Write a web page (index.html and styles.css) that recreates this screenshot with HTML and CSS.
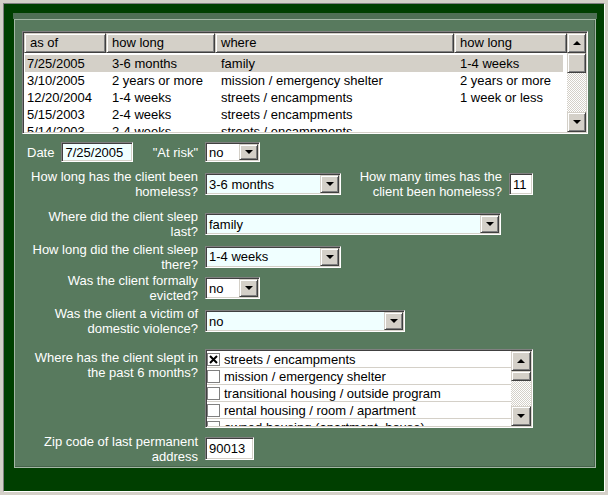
FILE: index.html
```html
<!DOCTYPE html>
<html lang="en">
<head>
    <meta charset="UTF-8">
    <title>Homeless history</title>
    <link rel="stylesheet" href="styles.css">
</head>
<body>
    <div class="frame">
        <div class="tab-strip"></div>
        <div class="panel">

            <!-- previous entries -->
            <div class="history">
                <div class="history-main">
                    <div class="history-head">
                        <div class="head-cell">as of</div>
                        <div class="head-cell">how long</div>
                        <div class="head-cell">where</div>
                        <div class="head-cell">how long</div>
                    </div>
                    <div class="history-rows">
                        <div class="history-row selected"><span>7/25/2005</span><span>3-6 months</span><span>family</span><span>1-4 weeks</span></div>
                        <div class="history-row"><span>3/10/2005</span><span>2 years or more</span><span>mission / emergency shelter</span><span>2 years or more</span></div>
                        <div class="history-row"><span>12/20/2004</span><span>1-4 weeks</span><span>streets / encampments</span><span>1 week or less</span></div>
                        <div class="history-row"><span>5/15/2003</span><span>2-4 weeks</span><span>streets / encampments</span><span></span></div>
                        <div class="history-row"><span>5/14/2003</span><span>2-4 weeks</span><span>streets / encampments</span><span></span></div>
                    </div>
                </div>
                <div class="scrollbar">
                    <div class="sb-btn"><span class="arrow-up"></span></div>
                    <div class="sb-thumb"></div>
                    <div class="sb-track"></div>
                    <div class="sb-btn"><span class="arrow-down"></span></div>
                </div>
            </div>

            <!-- current entry -->
            <div class="intake">
                <div class="date-group">
                    <span class="date-wrap">
                        <span class="q">Date</span>
                        <span class="field tinted date-field">7/25/2005</span>
                    </span>
                    <span class="q">"At risk"</span>
                </div>
                <div class="field dropdown short small">
                    <span class="value">no</span><span class="drop-btn"><span class="arrow-down"></span></span>
                </div>

                <div class="q">How long has the client been<br>homeless?</div>
                <div class="pair">
                    <div class="field tinted dropdown medium">
                        <span class="value">3-6 months</span><span class="drop-btn"><span class="arrow-down"></span></span>
                    </div>
                    <div class="q count-label">How many times has the<br>client been homeless?</div>
                    <div class="field count-field">11</div>
                </div>

                <div class="q">Where did the client sleep<br>last?</div>
                <div class="field tinted dropdown wide">
                    <span class="value">family</span><span class="drop-btn"><span class="arrow-down"></span></span>
                </div>

                <div class="q">How long did the client sleep<br>there?</div>
                <div class="field tinted dropdown medium">
                    <span class="value">1-4 weeks</span><span class="drop-btn"><span class="arrow-down"></span></span>
                </div>

                <div class="q">Was the client formally<br>evicted?</div>
                <div class="field dropdown short">
                    <span class="value">no</span><span class="drop-btn"><span class="arrow-down"></span></span>
                </div>

                <div class="q">Was the client a victim of<br>domestic violence?</div>
                <div class="field tinted dropdown half">
                    <span class="value">no</span><span class="drop-btn"><span class="arrow-down"></span></span>
                </div>

                <div class="q top">Where has the client slept in<br>the past 6 months?</div>
                <div class="checklist">
                    <div class="check-items">
                        <div class="check-item"><span class="box"><svg width="11" height="11" viewBox="0 0 11 11"><path d="M2 2l7 7M9 2l-7 7" stroke="#000" stroke-width="2"/></svg></span>streets / encampments</div>
                        <div class="check-item"><span class="box"></span>mission / emergency shelter</div>
                        <div class="check-item"><span class="box"></span>transitional housing / outside program</div>
                        <div class="check-item"><span class="box"></span>rental housing / room / apartment</div>
                        <div class="check-item"><span class="box"></span>owned housing (apartment, house)</div>
                    </div>
                    <div class="scrollbar list-bar">
                        <div class="sb-btn"><span class="arrow-up"></span></div>
                        <div class="sb-thumb"></div>
                        <div class="sb-track"></div>
                        <div class="sb-btn"><span class="arrow-down"></span></div>
                    </div>
                </div>

                <div class="q">Zip code of last permanent<br>address</div>
                <div class="field zip-field">90013</div>
            </div>
        </div>
    </div>
</body>
</html>
```

FILE: styles.css
```css
/* Form window */
body {
    margin: 0;
    background: #d4d0c8;
    font: 13px "Liberation Sans", Arial, sans-serif;
    color: #000;
}

.frame {
    margin: 3px;
    height: 489px;
    box-sizing: border-box;
    border: 1px solid;
    border-color: #808080 #fff #fff #808080;
    background: #003f00;
    padding: 9px 8px 0 10px;
}

.tab-strip {
    height: 6px;
    margin: 0 -1px;
    background: #4f6f55;
}

.panel {
    height: 449px;
    box-sizing: border-box;
    border: 1px solid #a3b7a5;
    box-shadow: inset -1px -1px #46644b;
    background: #587a5e;
    padding: 11px 7px 0;
}

/* sunken / raised borders, windows classic */
.history,
.field,
.checklist {
    box-sizing: border-box;
    border: 1px solid;
    border-color: #808080 #fff #fff #808080;
    box-shadow: inset 1px 1px #404040, inset -1px -1px #d4d0c8;
    background: #fff;
}

.head-cell,
.sb-btn,
.sb-thumb,
.drop-btn {
    box-sizing: border-box;
    background: #d4d0c8;
    border: 1px solid;
    border-color: #d4d0c8 #404040 #404040 #d4d0c8;
    box-shadow: inset 1px 1px #fff, inset -1px -1px #808080;
}

/* history list */
.history {
    display: flex;
    height: 103px;
    padding: 1px;
}

.history-main {
    flex: 1;
    overflow: hidden;
}

.history-head,
.history-row {
    display: grid;
    grid-template-columns: 82px 109px 239px 1fr;
}

.history-head {
    height: 20px;
}

.head-cell {
    padding-left: 5px;
    line-height: 18px;
    white-space: nowrap;
}

.history-rows {
    padding-top: 2px;
}

.history-row {
    height: 17px;
    line-height: 17px;
    margin: 0 4px 0 1px;
}

.history-row span {
    padding-left: 5px;
    white-space: nowrap;
    overflow: hidden;
}

.history-row span:first-child {
    padding-left: 2px;
}

.history-row.selected {
    background: #d4d0c8;
}

.scrollbar {
    width: 19px;
    display: flex;
    flex-direction: column;
}

.sb-btn {
    height: 20px;
    display: flex;
    align-items: center;
    justify-content: center;
}

.sb-thumb {
    height: 20px;
}

.sb-track {
    flex: 1;
    background: repeating-conic-gradient(#fff 0 25%, #d4d0c8 0 50%) 0 0 / 2px 2px;
}

.arrow-up,
.arrow-down {
    width: 0;
    height: 0;
    border-left: 4px solid transparent;
    border-right: 4px solid transparent;
}

.arrow-up {
    border-bottom: 4px solid #000;
}

.arrow-down {
    border-top: 4px solid #000;
}

/* questions */
.intake {
    display: grid;
    grid-template-columns: 176px 1fr;
    grid-template-rows: 24px 40px 40px 25px 38px 28px 93px 41px;
    column-gap: 7px;
    align-items: center;
    margin-top: 6px;
}

.q {
    color: #fff;
    text-align: right;
    line-height: 15px;
    white-space: nowrap;
}

.q.top {
    align-self: start;
    margin-top: 15px;
}

.date-group {
    display: flex;
    align-items: center;
    justify-content: space-between;
    padding-left: 5px;
}

.date-wrap {
    display: flex;
    align-items: center;
    gap: 7px;
}

.field {
    display: flex;
    align-items: center;
    height: 22px;
    padding-left: 3px;
    white-space: nowrap;
}

.field.tinted {
    background: #f0ffff;
}

.date-field {
    width: 72px;
    height: 20px;
}

.dropdown .value {
    flex: 1;
}

.drop-btn {
    width: 19px;
    align-self: stretch;
    margin: 1px;
    display: flex;
    align-items: center;
    justify-content: center;
}

.dropdown.small {
    height: 20px;
}

.short {
    width: 55px;
}

.medium {
    width: 136px;
}

.half {
    width: 200px;
}

.wide {
    width: 296px;
}

.pair {
    display: flex;
    align-items: center;
}

.count-label {
    width: 150px;
    margin-left: 11px;
}

.count-field {
    width: 24px;
    margin-left: 7px;
}

.zip-field {
    width: 49px;
    height: 23px;
}

/* places slept */
.checklist {
    align-self: start;
    margin-top: 14px;
    width: 328px;
    height: 79px;
    display: flex;
    padding: 1px;
}

.check-items {
    flex: 1;
    overflow: hidden;
}

.check-item {
    height: 16px;
    border-bottom: 1px solid #d4d0c8;
    display: flex;
    align-items: center;
    gap: 4px;
    white-space: nowrap;
}

.box {
    width: 13px;
    height: 13px;
    box-sizing: border-box;
    border: 1px solid #808080;
    background: #fff;
    display: flex;
    align-items: center;
    justify-content: center;
    flex: none;
}

.list-bar {
    width: 20px;
}

.list-bar .sb-thumb {
    height: 10px;
}
```
